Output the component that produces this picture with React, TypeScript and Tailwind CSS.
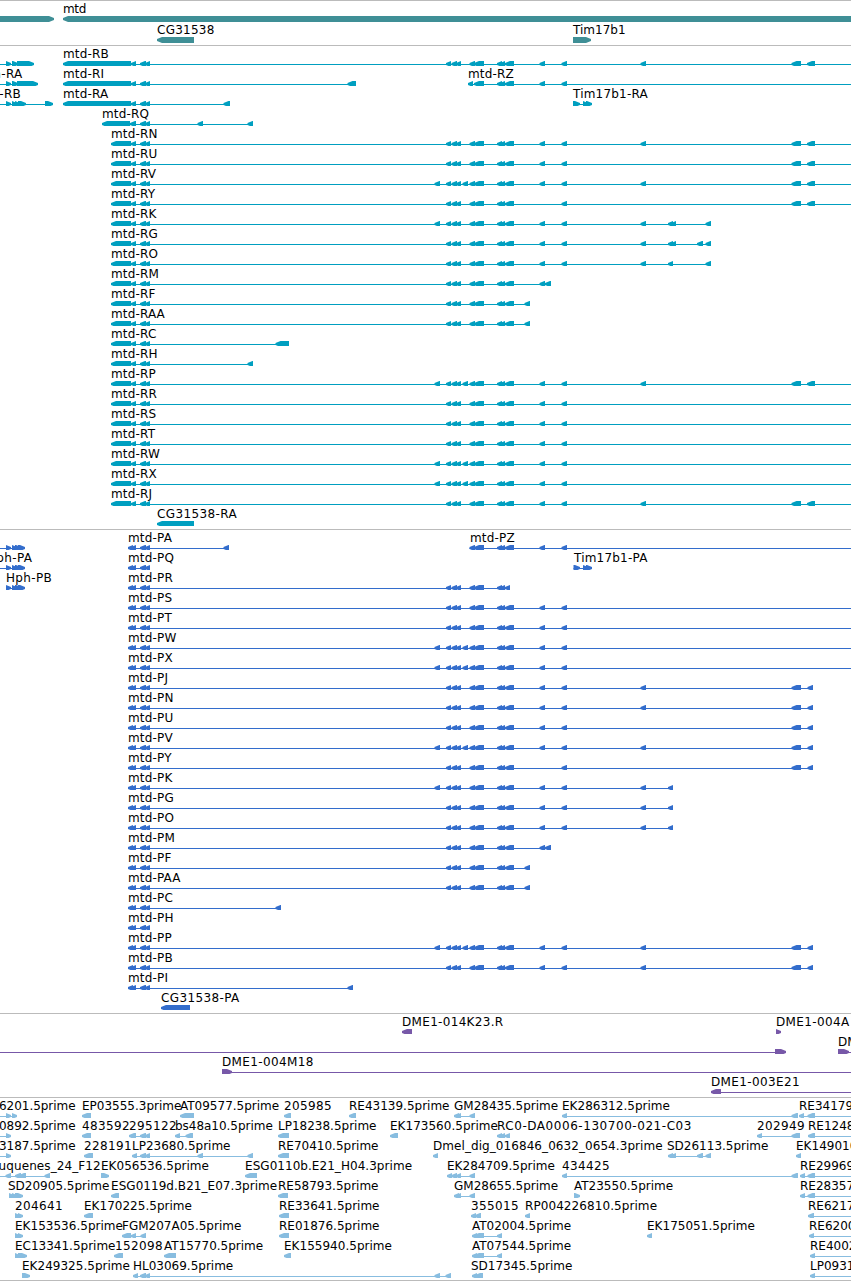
import React from "react";

type Span = [number, number];

interface Feature {
  label?: string;
  x: number;
  blocks: Span[];
  forward?: boolean;
  from?: number;
  to?: number;
}

interface Track {
  name: string;
  color: string;
  rowClass: string;
  padClass: string;
  rows: Feature[][];
}

const WIDTH = 851;

const rev = (label: string, x: number, blocks: Span[], to?: number): Feature => ({
  label,
  x,
  blocks,
  to,
});

const fwd = (
  label: string,
  x: number,
  blocks: Span[],
  from?: number,
  to?: number
): Feature => ({ label, x, blocks, forward: true, from, to });

// exon groups shared by the mtd isoforms
const pair: Span[] = [[140, 146], [145, 150]];
const utr: Span[] = [[111, 131], [131, 136], ...pair];
const longUtr: Span[] = [[63, 131], [131, 136], ...pair];
const cds: Span[] = [[128, 133], [131, 136], ...pair];
const trio: Span[] = [[446, 451], [451.5, 457], [456, 461]];
const core: Span[] = [[469.5, 475], [474, 484], [497, 502], [500, 505], [505, 514]];
const mid: Span[] = [...trio, ...core];
const midV: Span[] = [[434.5, 440], ...trio, [462.5, 468], ...core];
const midK: Span[] = [[434.5, 440], ...mid];
const a: Span = [539.5, 545];
const b: Span = [561.5, 567];
const c: Span = [640.5, 646];
const far: Span[] = [[791.5, 801], [807, 815]];
const farCds: Span[] = [[791.5, 801], [807.5, 813]];

const hphCds: Span[] = [[6, 11], [12, 17], [15, 21], [18, 25]];

const tracks: Track[] = [
  {
    name: "gene",
    color: "#3f8f96",
    rowClass: "h-[21px]",
    padClass: "pb-[2px]",
    rows: [
      [fwd("", 0, [[-20, 54]]), rev("mtd", 63, [[63, 870]])],
      [rev("CG31538", 157, [[157, 194]]), fwd("Tim17b1", 573, [[573, 591]])],
    ],
  },
  {
    name: "mRNA",
    color: "#009fc0",
    rowClass: "h-5",
    padClass: "pb-[3px]",
    rows: [
      [
        fwd("", 0, [[6, 11], [12, 18], [17, 34]], 0),
        rev("mtd-RB", 63, [...longUtr, ...mid, a, b, c, ...far], WIDTH),
      ],
      [
        fwd("Hph-RA", -24, [[6, 11], [12, 18], [17, 38]], 0),
        rev("mtd-RI", 63, [...longUtr, [347.5, 356]]),
        rev("mtd-RZ", 468, [[468, 473], [474, 484], [497, 502], [500, 505], [505, 514], a, b], WIDTH),
      ],
      [
        fwd("Hph-RB", -26, [[6, 11], [12, 17], [15, 20], [18, 26], [45, 53]], 0),
        rev("mtd-RA", 63, [...longUtr, [223.5, 230]]),
        fwd("Tim17b1-RA", 573, [[573, 580], [583, 588], [586, 592]]),
      ],
      [rev("mtd-RQ", 102, [[102, 130], [130, 136], ...pair, [197.5, 203], [247.5, 253]])],
      [rev("mtd-RN", 111, [...utr, ...mid, a, b, c, ...far], WIDTH)],
      [rev("mtd-RU", 111, [...utr, ...mid, a, b, ...far], WIDTH)],
      [rev("mtd-RV", 111, [...utr, ...midV, a, b, c, ...far], WIDTH)],
      [rev("mtd-RY", 111, [...utr, ...mid, b, ...far], WIDTH)],
      [rev("mtd-RK", 111, [...utr, ...midK, a, b, c, [668, 673], [671, 676], [705.5, 711]])],
      [rev("mtd-RG", 111, [...utr, ...mid, a, b, c, [668, 673], [671, 676], [697, 703], [705.5, 711]])],
      [rev("mtd-RO", 111, [...utr, ...mid, a, b, c, [668, 673], [705.5, 711]])],
      [rev("mtd-RM", 111, [...utr, ...mid, [539.5, 545], [545, 551]])],
      [rev("mtd-RF", 111, [...utr, ...mid, [524.5, 530]])],
      [rev("mtd-RAA", 111, [...utr, ...mid, [524.5, 530]])],
      [rev("mtd-RC", 111, [...utr, [275.5, 289]])],
      [rev("mtd-RH", 111, [...utr, [247.5, 253]])],
      [rev("mtd-RP", 111, [...utr, ...midV, a, b, c, ...far], WIDTH)],
      [rev("mtd-RR", 111, [...utr, ...mid, a, b], WIDTH)],
      [rev("mtd-RS", 111, [...utr, ...mid, a, b], WIDTH)],
      [rev("mtd-RT", 111, [...utr, ...mid, a, b], WIDTH)],
      [rev("mtd-RW", 111, [...utr, ...midV, a, b], WIDTH)],
      [rev("mtd-RX", 111, [...utr, ...midV, a, b], WIDTH)],
      [rev("mtd-RJ", 111, [...utr, ...mid, a, b, c, ...far], WIDTH)],
      [rev("CG31538-RA", 157, [[157, 194]])],
    ],
  },
  {
    name: "CDS",
    color: "#336dcc",
    rowClass: "h-5",
    padClass: "pb-[3px]",
    rows: [
      [
        fwd("", 0, hphCds, 0),
        rev("mtd-PA", 128, [...cds, [223.5, 229]]),
        rev("mtd-PZ", 470, [...core, a, b], WIDTH),
      ],
      [
        fwd("Hph-PA", -13, hphCds, 0),
        rev("mtd-PQ", 128, cds),
        fwd("Tim17b1-PA", 574, [[573.5, 580], [583, 588], [586, 592]]),
      ],
      [
        fwd("Hph-PB", 6, hphCds),
        rev("mtd-PR", 128, [...cds, ...trio, [469.5, 475], [474, 484], [497, 502], [500, 505], [505, 510]]),
      ],
      [rev("mtd-PS", 128, [...cds, ...mid, a, b], WIDTH)],
      [rev("mtd-PT", 128, [...cds, ...mid, a, b], WIDTH)],
      [rev("mtd-PW", 128, [...cds, ...midV, a, b], WIDTH)],
      [rev("mtd-PX", 128, [...cds, ...midV, a, b], WIDTH)],
      [rev("mtd-PJ", 128, [...cds, ...mid, a, b, c, ...farCds])],
      [rev("mtd-PN", 128, [...cds, ...mid, a, b, c, ...farCds])],
      [rev("mtd-PU", 128, [...cds, ...mid, a, b, ...farCds])],
      [rev("mtd-PV", 128, [...cds, ...midV, a, b, c, ...farCds])],
      [rev("mtd-PY", 128, [...cds, ...mid, b, ...farCds])],
      [rev("mtd-PK", 128, [...cds, ...midK, a, b, c, [668, 673]])],
      [rev("mtd-PG", 128, [...cds, ...mid, a, b, c, [668, 673]])],
      [rev("mtd-PO", 128, [...cds, ...mid, a, b, c, [668, 673]])],
      [rev("mtd-PM", 128, [...cds, ...mid, [539.5, 545], [545, 551]])],
      [rev("mtd-PF", 128, [...cds, ...mid, [524.5, 530]])],
      [rev("mtd-PAA", 128, [...cds, ...mid, [524.5, 530]])],
      [rev("mtd-PC", 128, [...cds, [275.5, 281]])],
      [rev("mtd-PH", 128, cds)],
      [rev("mtd-PP", 128, [...cds, ...midV, a, b, c, ...farCds])],
      [rev("mtd-PB", 128, [...cds, ...mid, a, b, c, ...farCds])],
      [rev("mtd-PI", 128, [...cds, [347.5, 353]])],
      [rev("CG31538-PA", 161, [[161, 190]])],
    ],
  },
  {
    name: "BAC",
    color: "#7758a8",
    rowClass: "h-5",
    padClass: "pb-[3px]",
    rows: [
      [rev("DME1-014K23.R", 402, [[402, 412]]), fwd("DME1-004A", 776, [[776, 781]])],
      [fwd("", 0, [[775, 786]], 0), fwd("DME1", 838, [[838, 849]], 838, WIDTH)],
      [fwd("DME1-004M18", 222, [[222, 232]], 222, WIDTH)],
      [rev("DME1-003E21", 711, [[711, 721]], WIDTH)],
    ],
  },
  {
    name: "EST",
    color: "#88bde0",
    rowClass: "h-5",
    padClass: "border-b pb-[2px]",
    rows: [
      [
        fwd("6201.5prime", -1, [[6, 11], [12, 17]], 0),
        rev("EP03555.3prime", 82, [[82, 91]]),
        rev("AT09577.5prime", 180, [[180, 194]]),
        rev("205985", 284, [[284, 291]]),
        rev("RE43139.5prime", 349, [[349, 356]]),
        rev("GM28435.5prime", 454, [[454, 459], [456, 461], [469.5, 475]]),
        rev("EK286312.5prime", 562, [[562, 567], [791.5, 798]]),
        rev("RE34179.5prime", 799, [[799, 804], [807.5, 815]], WIDTH),
      ],
      [
        fwd("0892.5prime", -1, [[6, 11]], 0),
        rev("483592", 82, [[82, 91]]),
        rev("295122", 129, [[129, 136], ...pair]),
        rev("bs48a10.5prime", 175, [[175, 180], [185.5, 193]]),
        rev("LP18238.5prime", 278, [[278, 289]]),
        rev("EK173560.5prime", 390, [[390, 398]]),
        rev("RC0-DA0006-130700-021-C03", 497, [[497, 502], [500, 505], [505, 510]]),
        rev("202949", 757, [[757, 762], [791.5, 800]]),
        rev("RE12480.5prime", 808, [[808, 815]], WIDTH),
      ],
      [
        fwd("3187.5prime", -1, [[6, 11]], 0),
        rev("228191", 84, [[84, 93]]),
        rev("LP23680.5prime", 132, [[132, 137], ...pair, [197.5, 203], [247.5, 253]]),
        rev("RE70410.5prime", 278, [[278, 289]]),
        rev("Dmel_dig_016846_0632_0654.3prime", 433, [[433, 438]]),
        rev("SD26113.5prime", 667, [[668, 673], [671, 676], [697, 703], [705.5, 711]]),
        rev("EK149010.5prime", 796, [[796, 801]]),
      ],
      [
        rev("Luquenes_24_F12", -8, [[-10, -5], [5.5, 11], [15, 21], [19, 26], [44.5, 50]]),
        fwd("EK056536.5prime", 101, [[101, 109]]),
        rev("ESG0110b.E21_H04.3prime", 245, [[245, 257]]),
        rev("EK284709.5prime", 447, [[447, 452], [451.5, 457], [456, 461], [469.5, 475]]),
        rev("434425", 562, [[562, 567], [791.5, 798]]),
        rev("RE29969.5prime", 800, [[800, 805], [807.5, 815]], WIDTH),
      ],
      [
        fwd("SD20905.5prime", 8, [[9, 14], [12, 17], [15, 23]]),
        rev("ESG0119d.B21_E07.3prime", 111, [[111, 119]]),
        rev("RE58793.5prime", 278, [[278, 288]]),
        rev("GM28655.5prime", 454, [[454, 459], [456, 461], [469.5, 475]]),
        fwd("AT23550.5prime", 574, [[574, 580]]),
        rev("RE28357.5prime", 800, [[800, 805], [807.5, 815]], WIDTH),
      ],
      [
        fwd("204641", 15, [[15, 20], [18, 23]]),
        rev("EK170225.5prime", 84, [[84, 93]]),
        rev("RE33641.5prime", 279, [[279, 289]]),
        rev("355015", 471, [[471, 476], [475, 481]]),
        rev("RP004226810.5prime", 525, [[525, 530]]),
        rev("RE62170.5prime", 808, [[808, 814]], WIDTH),
      ],
      [
        fwd("EK153536.5prime", 15, [[15, 20], [18, 23]]),
        rev("FGM207A05.5prime", 122, [[122, 131], [131, 136], [140.5, 146]]),
        rev("RE01876.5prime", 279, [[279, 289]]),
        rev("AT02004.5prime", 472, [[472, 477], [474, 484], [497, 502]]),
        rev("EK175051.5prime", 647, [[647, 652]]),
        rev("RE62000.5prime", 809, [[809, 814]], WIDTH),
      ],
      [
        fwd("EC13341.5prime", 15, [[15, 20], [18, 27]]),
        rev("152098", 115, [[114, 123]]),
        rev("AT15770.5prime", 164, [[164, 176]]),
        rev("EK155940.5prime", 284, [[284, 291]]),
        rev("AT07544.5prime", 472, [[472, 477], [474, 484], [497, 502]]),
        rev("RE40020.5prime", 810, [[810, 815]], WIDTH),
      ],
      [
        fwd("EK249325.5prime", 22, [[22, 30]]),
        rev("HL03069.5prime", 133, [[133, 138], ...pair, [434.5, 440], [445.5, 451]]),
        rev("SD17345.5prime", 471, [[472, 477], [475, 483]]),
        rev("LP09310.5prime", 810, [[810, 815]], WIDTH),
      ],
    ],
  },
];

// glyphs sit on whole pixels: digits and hyphens are wide, "m" is narrow
const spacing = (label: string) => {
  const count = (re: RegExp) => (label.match(re) || []).length;
  const extra =
    count(/\d/g) * 0.36 + count(/-/g) * 2 - count(/m/g) - count(/prime/g) * 1.2;
  return `${(extra / label.length).toFixed(3)}px`;
};

function arrow([x1, x2]: Span, forward?: boolean) {
  const head = Math.min(5, x2 - x1);
  return forward
    ? `M${x1} 0H${x2 - head}L${x2} 2V4L${x2 - head} 6H${x1}Z`
    : `M${x2} 0H${x1 + head}L${x1} 2V4L${x1 + head} 6H${x2}Z`;
}

function Row({ features, color, rowClass }: { features: Feature[]; color: string; rowClass: string }) {
  return (
    <div className={`relative ${rowClass} pt-[15px] overflow-hidden`}>
      <svg width={WIDTH} height={6} className="block" fill={color}>
        {features.map((f, i) => {
          const start = f.from ?? f.blocks[0][0];
          const end = f.to ?? f.blocks[f.blocks.length - 1][1];
          return (
            <g key={i}>
              {(f.blocks.length > 1 || f.from !== undefined || f.to !== undefined) && (
                <rect x={start} y={3} width={end - start} height={1} />
              )}
              <path d={f.blocks.map((s) => arrow(s, f.forward)).join("")} />
            </g>
          );
        })}
      </svg>
      {features.map(
        (f, i) =>
          f.label && (
            <span
              key={i}
              className="absolute top-[1px] leading-[14px] whitespace-nowrap"
              style={{ left: f.x, letterSpacing: spacing(f.label) }}
            >
              {f.label}
            </span>
          )
      )}
    </div>
  );
}

function App() {
  return (
    <main className="w-[851px] h-[1281px] overflow-hidden bg-white text-black text-[12px] font-['DejaVu_Sans',sans-serif]">
      {tracks.map((track) => (
        <section key={track.name} className={`border-t border-[#bbbbbb] ${track.padClass}`}>
          {track.rows.map((features, i) => (
            <Row key={i} features={features} color={track.color} rowClass={track.rowClass} />
          ))}
        </section>
      ))}
    </main>
  );
}

export default App;
